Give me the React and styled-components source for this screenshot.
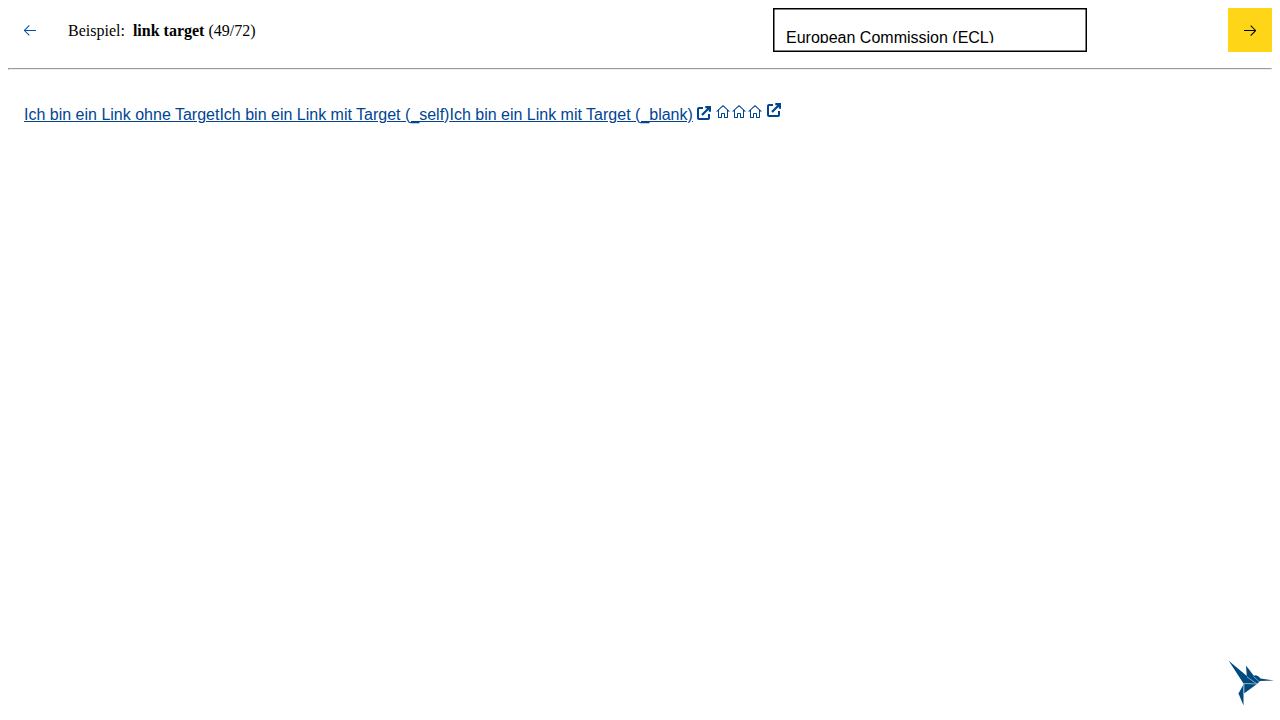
import React from 'react';
import styled, { createGlobalStyle } from 'styled-components';
import { VscArrowLeft, VscArrowRight, VscHome } from 'react-icons/vsc';

const GlobalStyle = createGlobalStyle`
  body { margin: 8px; background: #fff; color: #000; font: 16px/normal "Liberation Serif", "Times New Roman", serif; }
`;

const Header = styled.header`
  display: flex;
  align-items: center;
  height: 44px;
`;

const NavButton = styled.button`
  display: flex;
  align-items: center;
  justify-content: center;
  flex: none;
  width: 44px;
  height: 44px;
  padding: 0;
  border: 0;
  font-size: 16px;
  color: ${({ $primary }) => ($primary ? '#000' : '#004fa8')};
  background: ${({ $primary }) => ($primary ? '#ffd617' : 'transparent')};
`;

const Title = styled.div`
  flex: 1;
  padding: 2px 0 0 16px;
  white-space: pre;
`;

const ThemeSelect = styled.div`
  box-sizing: border-box;
  flex: none;
  width: 314.4px;
  height: 44px;
  margin-right: 140.6px;
  padding: 20px 13px 0;
  box-shadow: inset 0 0 0 1.5px #000;
  font: 16px/20px "Liberation Sans", Arial, sans-serif;
`;

const SelectValue = styled.div`
  height: 14.5px;
  overflow: hidden;
`;

const Divider = styled.hr`
  margin: 16px 0 0;
`;

const Links = styled.main`
  display: flex;
  align-items: flex-start;
  padding: 34px 16px 0;
  font: 16px/22px "Liberation Sans", Arial, sans-serif;
`;

const Link = styled.a`
  flex: none;
  color: #004494;
  text-decoration: underline;
`;

const IconLink = styled.a`
  display: flex;
  flex: none;
  margin-left: ${({ $gap = 0 }) => $gap}px;
  margin-top: ${({ $top = 0 }) => $top}px;
  color: #004494;
  font-size: 16px;
`;

const Bird = styled.svg`
  position: fixed;
  left: 1228px;
  top: 660px;
  width: 47px;
  height: 47px;
`;

function ExternalIcon() {
  return (
    <svg width="14" height="14" viewBox="0 0 14 14" fill="none" stroke="currentColor" strokeWidth="2">
      <path d="M6 2H2Q1 2 1 3v9q0 1 1 1h9q1 0 1-1V8" />
      <path d="M8.3 1.1H12.9v4.6M13 1 5 9" strokeWidth="2.2" />
    </svg>
  );
}

export default function App() {
  return (
    <>
      <GlobalStyle />
      <Header>
        <NavButton aria-label="zurück"><VscArrowLeft /></NavButton>
        <Title>Beispiel:  <b>link target</b> (49/72)</Title>
        <ThemeSelect><SelectValue>European Commission (ECL)</SelectValue></ThemeSelect>
        <NavButton $primary aria-label="weiter"><VscArrowRight /></NavButton>
      </Header>
      <Divider />
      <Links>
        <Link href="#a">Ich bin ein Link ohne Target</Link>
        <Link href="#b">Ich bin ein Link mit Target (_self)</Link>
        <Link href="#c">Ich bin ein Link mit Target (_blank)</Link>
        <IconLink href="#c" $gap={4} $top={2}><ExternalIcon /></IconLink>
        <IconLink href="#d" $gap={4}><VscHome /></IconLink>
        <IconLink href="#e"><VscHome /></IconLink>
        <IconLink href="#f"><VscHome /></IconLink>
        <IconLink href="#f" $gap={4} $top={-1}><ExternalIcon /></IconLink>
      </Links>
      <Bird viewBox="0 0 47 47" fill="#004a7f" aria-hidden="true">
        <path d="M.7.7 19.5 16.5 29 24 15.5 23.5Z" />
        <path d="M18 5.5 26 16 24 18 18.8 16.5Z" />
        <path d="M19.5 17 28 15.3Q31 16 32.5 18.6L46 20.5 32 21 29 24Z" />
        <path d="M15.5 23.5 29 24 16 33.5Z" />
        <path d="M15.5 24.5V45.5L10.5 33.5Z" />
        <path d="M19 17 29 24 15.5 23.5M25.5 16.5 31 21.5M16 24V34" fill="none" stroke="#c5d9e6" strokeWidth=".6" />
      </Bird>
    </>
  );
}
